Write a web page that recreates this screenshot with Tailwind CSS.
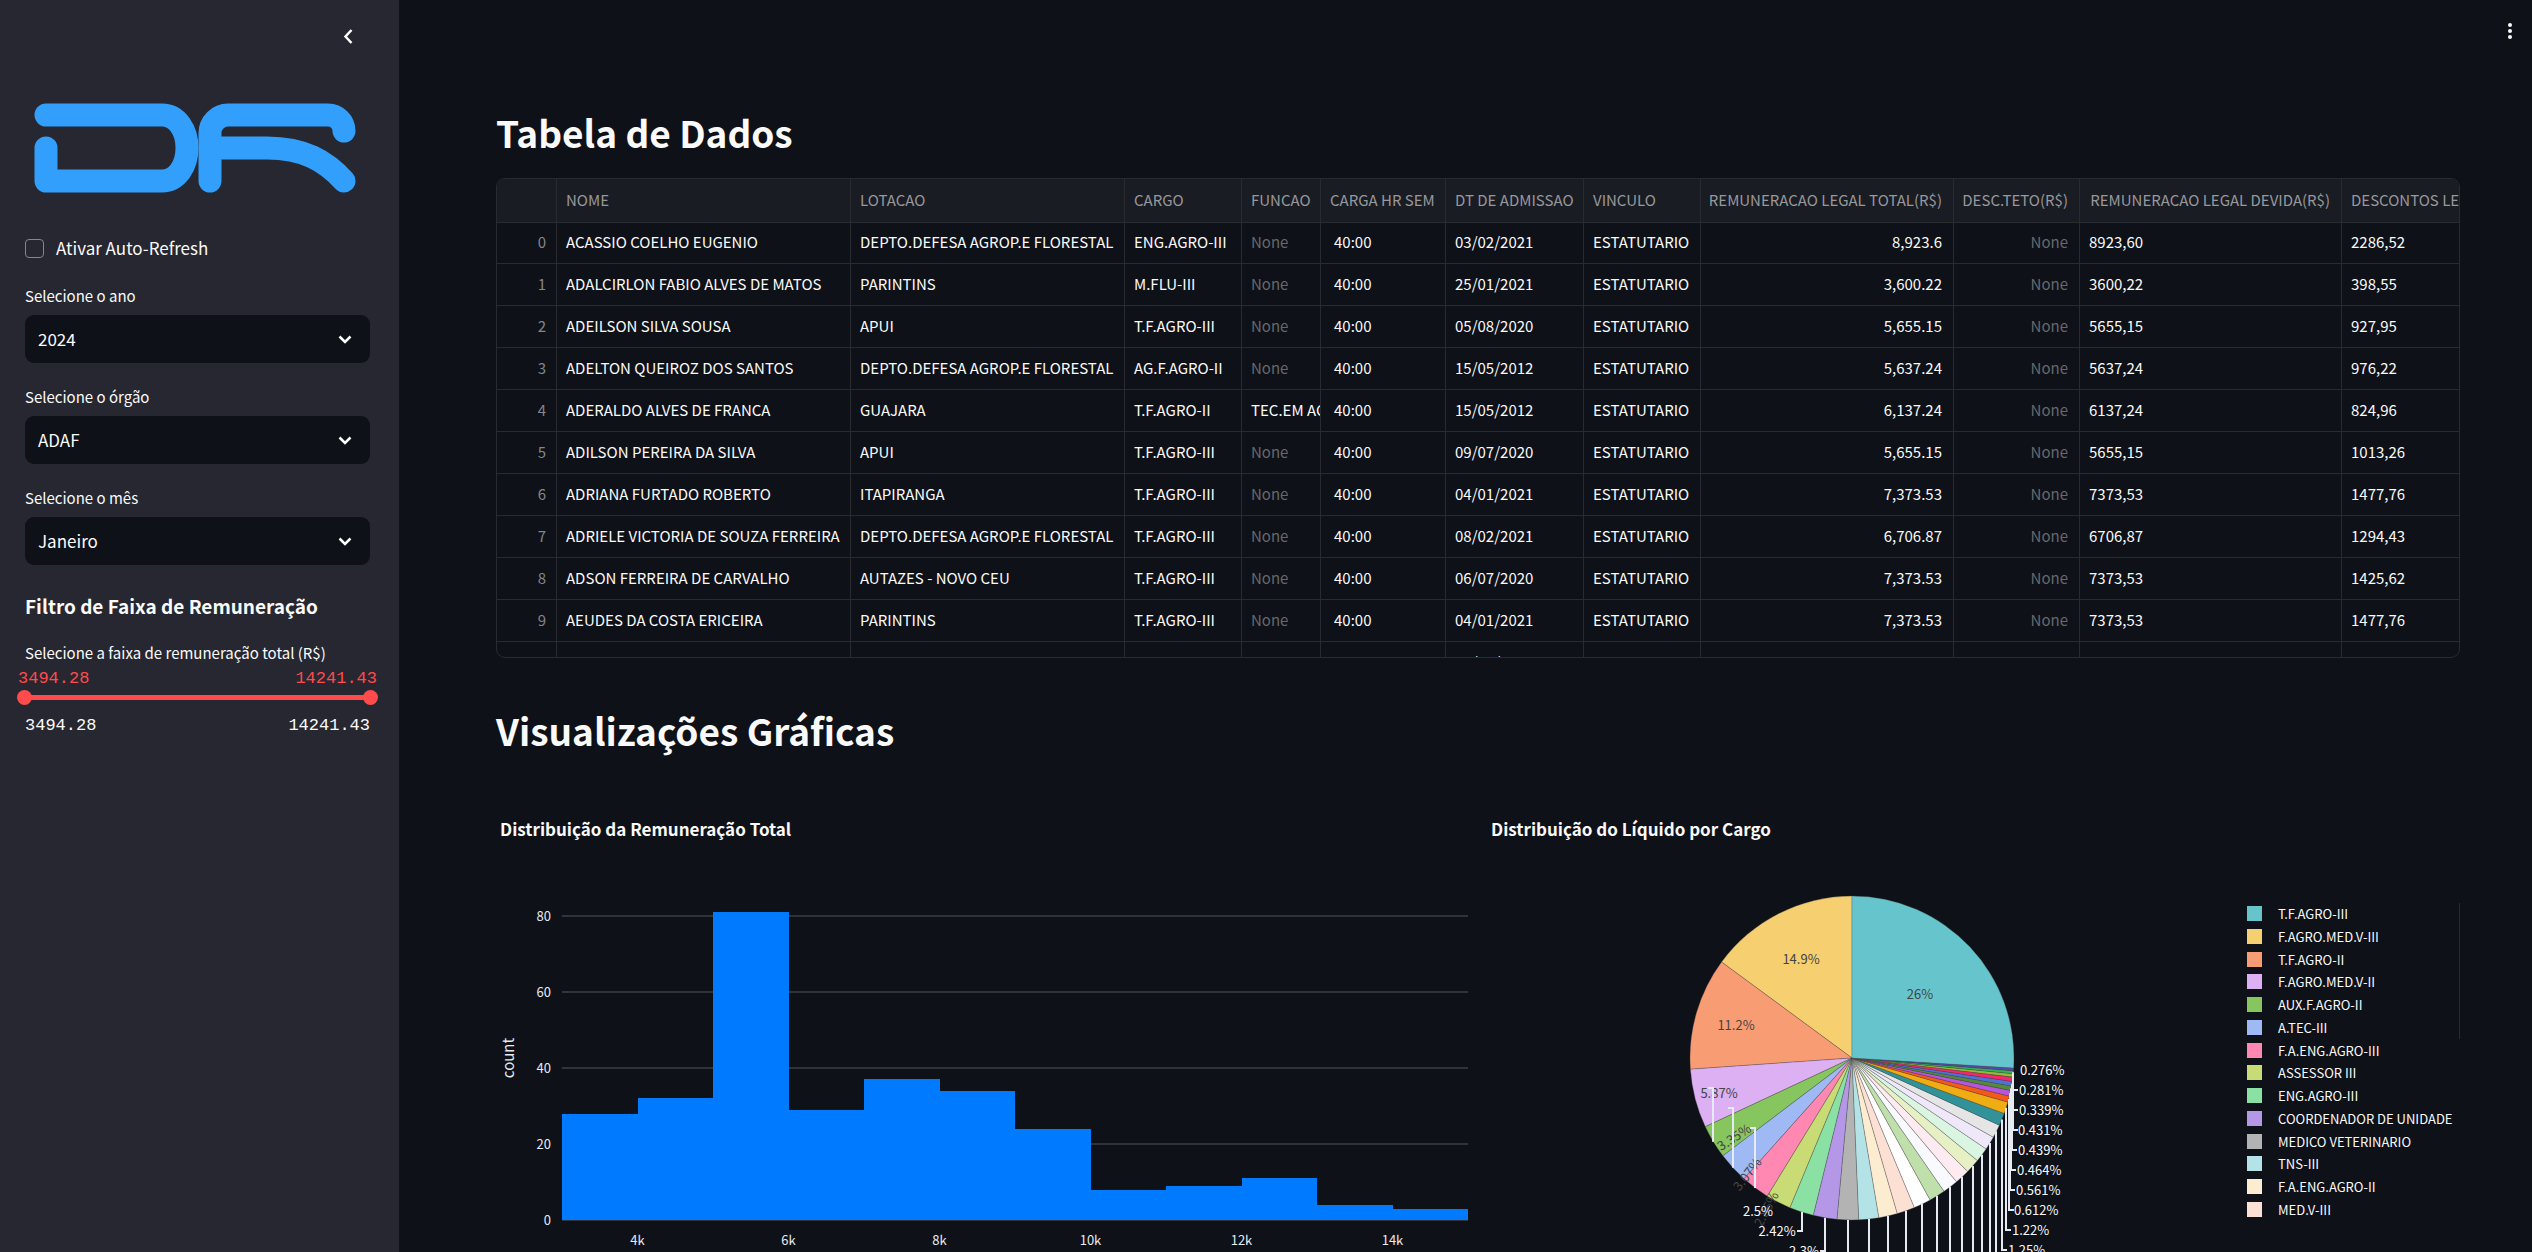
<!DOCTYPE html>
<html lang="pt-BR">
<head>
<meta charset="utf-8">
<title>Tabela de Dados</title>
<meta name="viewport" content="width=device-width, initial-scale=1">
<script src="https://cdn.jsdelivr.net/npm/@tailwindcss/browser@4"></script>
</head>
<body class="bg-[#0e1117] text-[#fafafa] font-['Noto_Sans_CJK_SC',sans-serif] text-[17px]">
<div class="flex h-screen overflow-hidden">

  <!-- Sidebar -->
  <aside class="w-[399px] shrink-0 bg-[#262730] pl-[25px] pr-[29px] flex flex-col">
    <div class="h-[90px] flex items-start justify-end pt-6 pr-2.5">
      <button type="button" aria-label="Fechar barra lateral" class="size-6">
        <svg viewBox="0 0 24 24" class="size-6" fill="none" stroke="#fff" stroke-width="2.500"><path d="M15.500 6l-6 6.500 6 6.500"/></svg>
      </button>
    </div>

    <svg viewBox="0 0 345 116" class="w-full" fill="none" stroke="#319ffb" stroke-width="23" stroke-linecap="round" stroke-linejoin="round" role="img" aria-label="DR">
      <path d="M21 25H137C152 25 162 40 162 58S152 91 137 91H21V58"/>
      <path d="M185 91V43A18 18 0 0 1 203 25H303A16 16 0 0 1 319 41"/>
      <path d="M188 58H242C279 58 301 71 319 91"/>
    </svg>

    <label class="mt-[26px] h-8 flex items-center gap-3">
      <input type="checkbox" class="appearance-none size-[19px] rounded border border-[#85868b]">
      <span>Ativar Auto-Refresh</span>
    </label>

    <div class="mt-5 flex flex-col gap-[22px]">
      <div class="flex flex-col gap-[7px]">
        <label for="ano" class="text-[15px] leading-6">Selecione o ano</label>
        <div class="relative">
          <select id="ano" class="appearance-none w-full h-12 rounded-[9px] bg-[#0e1117] pl-[13px]"><option>2024</option></select>
          <svg viewBox="0 0 24 24" class="pointer-events-none absolute right-[13px] top-3 size-6" fill="none" stroke="#fff" stroke-width="2.500"><path d="M6.500 9.500l5.500 5.500L17.500 9.500"/></svg>
        </div>
      </div>
      <div class="flex flex-col gap-[7px]">
        <label for="orgao" class="text-[15px] leading-6">Selecione o órgão</label>
        <div class="relative">
          <select id="orgao" class="appearance-none w-full h-12 rounded-[9px] bg-[#0e1117] pl-[13px]"><option>ADAF</option></select>
          <svg viewBox="0 0 24 24" class="pointer-events-none absolute right-[13px] top-3 size-6" fill="none" stroke="#fff" stroke-width="2.500"><path d="M6.500 9.500l5.500 5.500L17.500 9.500"/></svg>
        </div>
      </div>
      <div class="flex flex-col gap-[7px]">
        <label for="mes" class="text-[15px] leading-6">Selecione o mês</label>
        <div class="relative">
          <select id="mes" class="appearance-none w-full h-12 rounded-[9px] bg-[#0e1117] pl-[13px]"><option>Janeiro</option></select>
          <svg viewBox="0 0 24 24" class="pointer-events-none absolute right-[13px] top-3 size-6" fill="none" stroke="#fff" stroke-width="2.500"><path d="M6.500 9.500l5.500 5.500L17.500 9.500"/></svg>
        </div>
      </div>
    </div>

    <h3 class="mt-[26px] text-[19px] leading-[30px] font-semibold whitespace-nowrap">Filtro de Faixa de Remuneração</h3>
    <label for="faixa-min" class="mt-5 text-[15px] leading-6">Selecione a faixa de remuneração total (R$)</label>
    <div class="mt-1 -mx-[7px] flex justify-between font-['Liberation_Mono',monospace] leading-5 text-[#ff4b4b]">
      <output>3494.28</output><output>14241.43</output>
    </div>
    <div class="relative -mx-2 h-4">
      <div class="absolute inset-x-2 top-[6px] h-[5px] bg-[#ff4b4b]"></div>
      <input id="faixa-min" type="range" min="3494.28" max="14241.43" step="0.01" value="3494.28" class="absolute inset-0 w-full h-4 appearance-none bg-transparent [&::-webkit-slider-thumb]:appearance-none [&::-webkit-slider-thumb]:size-[15px] [&::-webkit-slider-thumb]:rounded-full [&::-webkit-slider-thumb]:bg-[#ff4b4b]">
      <input aria-label="Valor máximo" type="range" min="3494.28" max="14241.43" step="0.01" value="14241.43" class="absolute inset-0 w-full h-4 appearance-none bg-transparent [&::-webkit-slider-thumb]:appearance-none [&::-webkit-slider-thumb]:size-[15px] [&::-webkit-slider-thumb]:rounded-full [&::-webkit-slider-thumb]:bg-[#ff4b4b]">
    </div>
    <div class="mt-[11px] flex justify-between font-['Liberation_Mono',monospace] leading-5">
      <span>3494.28</span><span>14241.43</span>
    </div>
  </aside>

  <!-- Main content -->
  <main class="relative flex-1 min-w-0 pl-[97px] pr-[72px] pt-[106px]">
    <button type="button" aria-label="Menu" class="absolute right-2.5 top-[19px] size-6">
      <svg viewBox="0 0 24 24" class="size-6" fill="#fafafa"><circle cx="12" cy="6" r="2"/><circle cx="12" cy="12" r="2"/><circle cx="12" cy="18" r="2"/></svg>
    </button>

    <h2 class="text-[37px] leading-[52px] font-semibold">Tabela de Dados</h2>

    <div class="mt-5 h-[480px] overflow-hidden rounded-[9px] border border-[#292b31]">
      <table class="table-fixed w-[2100px] border-separate border-spacing-0 text-[15px] leading-5 whitespace-nowrap">
        <colgroup>
          <col class="w-[60px]"><col class="w-[294px]"><col class="w-[274px]"><col class="w-[117px]"><col class="w-[79px]"><col class="w-[125px]"><col class="w-[138px]"><col class="w-[117px]"><col class="w-[253px]"><col class="w-[126px]"><col class="w-[262px]"><col class="w-[255px]">
        </colgroup>
        <thead id="head"></thead>
        <tbody id="rows"></tbody>
      </table>
    </div>

    <h2 class="mt-[46px] text-[37px] leading-[52px] font-semibold">Visualizações Gráficas</h2>

    <div class="mt-11 grid grid-cols-2 gap-5">
      <svg id="hist" viewBox="0 0 972 540" class="w-full fill-[#e6eaf1] text-[13px]"></svg>
      <svg id="pie" viewBox="0 0 972 540" class="w-full fill-[#fafafa] text-[13px]"></svg>
    </div>
  </main>
</div>

<script>
const heads = ['', 'NOME', 'LOTACAO', 'CARGO', 'FUNCAO', 'CARGA HR SEM', 'DT DE ADMISSAO', 'VINCULO', 'REMUNERACAO LEGAL TOTAL(R$)', 'DESC.TETO(R$)', 'REMUNERACAO LEGAL DEVIDA(R$)', 'DESCONTOS LEGAIS(R$)'];
const data = [
  ['ACASSIO COELHO EUGENIO', 'DEPTO.DEFESA AGROP.E FLORESTAL', 'ENG.AGRO-III', null, '03/02/2021', '8,923.6', '8923,60', '2286,52'],
  ['ADALCIRLON FABIO ALVES DE MATOS', 'PARINTINS', 'M.FLU-III', null, '25/01/2021', '3,600.22', '3600,22', '398,55'],
  ['ADEILSON SILVA SOUSA', 'APUI', 'T.F.AGRO-III', null, '05/08/2020', '5,655.15', '5655,15', '927,95'],
  ['ADELTON QUEIROZ DOS SANTOS', 'DEPTO.DEFESA AGROP.E FLORESTAL', 'AG.F.AGRO-II', null, '15/05/2012', '5,637.24', '5637,24', '976,22'],
  ['ADERALDO ALVES DE FRANCA', 'GUAJARA', 'T.F.AGRO-II', 'TEC.EM AGROPECUARIA', '15/05/2012', '6,137.24', '6137,24', '824,96'],
  ['ADILSON PEREIRA DA SILVA', 'APUI', 'T.F.AGRO-III', null, '09/07/2020', '5,655.15', '5655,15', '1013,26'],
  ['ADRIANA FURTADO ROBERTO', 'ITAPIRANGA', 'T.F.AGRO-III', null, '04/01/2021', '7,373.53', '7373,53', '1477,76'],
  ['ADRIELE VICTORIA DE SOUZA FERREIRA', 'DEPTO.DEFESA AGROP.E FLORESTAL', 'T.F.AGRO-III', null, '08/02/2021', '6,706.87', '6706,87', '1294,43'],
  ['ADSON FERREIRA DE CARVALHO', 'AUTAZES - NOVO CEU', 'T.F.AGRO-III', null, '06/07/2020', '7,373.53', '7373,53', '1425,62'],
  ['AEUDES DA COSTA ERICEIRA', 'PARINTINS', 'T.F.AGRO-III', null, '04/01/2021', '7,373.53', '7373,53', '1477,76'],
  ['AGEMIRO MORA LOPES', 'PAUINI', 'CC.SOFTWARE', 'CC.SOFTWARE', '04/01/2021', '7,373.53', '7373,53', '1477,76'],
];
const line = 'border-r border-b border-[#292b31] overflow-hidden pt-0 pb-0.5';
document.getElementById('head').innerHTML = '<tr>' + heads.map((h, i) =>
  `<th scope="col" class="${line} h-11 bg-[#1a1c23] font-normal text-[#97989c] ${i >= 8 && i <= 10 ? 'text-right pr-[11px]' : 'text-left pl-[9px]'}">${h}</th>`).join('') + '</tr>';
document.getElementById('rows').innerHTML = data.map((d, i) => {
  const none = '<span class="text-[#66686d]">None</span>';
  const left = (v, pad = 'pl-[9px]') => `<td class="${line} ${pad}">${v}</td>`;
  const right = v => `<td class="${line} text-right pr-[11px]">${v}</td>`;
  return `<tr class="${i ? 'h-[42px]' : 'h-[41px]'}"><td class="${line} text-right pr-2.5 text-[#84868a]">${i}</td>` +
    left(d[0]) + left(d[1]) + left(d[2]) + left(d[3] || none) + left('40:00', 'pl-[13px]') + left(d[4]) + left('ESTATUTARIO') +
    right(d[5]) + right(none) + left(d[6]) + left(d[7]) + '</tr>';
}).join('');

/* Histogram */
const counts = [28, 32, 81, 29, 37, 34, 24, 8, 9, 11, 4, 3];
const X0 = 66, BW = 75.5, Y0 = 420, U = 3.8;
let h = '<text x="4" y="36" class="text-[17px] font-semibold fill-[#fafafa]">Distribuição da Remuneração Total</text>';
for (const v of [0, 20, 40, 60, 80]) {
  h += `<rect x="${X0}" y="${Y0 - v * U - 1}" width="906" height="2" fill="#31333c"/><text x="55" y="${Y0 - v * U + 5}" text-anchor="end">${v}</text>`;
}
counts.forEach((c, i) => {
  const a = Math.round(X0 + i * BW), b = Math.round(X0 + (i + 1) * BW), t = Math.round(Y0 - c * U);
  h += `<rect x="${a}" y="${t}" width="${b - a}" height="${Y0 - t}" fill="#007aff"/>`;
});
['4k', '6k', '8k', '10k', '12k', '14k'].forEach((t, i) => h += `<text x="${X0 + BW + i * 151}" y="445" text-anchor="middle">${t}</text>`);
h += '<text transform="translate(18 258) rotate(-90)" text-anchor="middle" class="text-[15px]">count</text>';
document.getElementById('hist').innerHTML = h;

/* Pie: first slice runs clockwise from the top, the others follow anticlockwise */
const CX = 364, CY = 258, R = 162;
const slices = [
  [14.9, '#f6cf71'], [11.2, '#f89c74'], [5.87, '#dcb0f2'], [3.35, '#87c55f'], [3.07, '#9eb9f3'], [2.86, '#fe88b1'],
  [2.5, '#c9db74'], [2.42, '#8be0a4'], [2.36, '#b497e7'], [2.14, '#b3b3b3'], [1.99, '#b3e3e6'], [1.85, '#fcedd0'],
  [1.78, '#fde0d4'], [1.72, '#ffffff'], [1.61, '#bfe0aa'], [1.55, '#f8faff'], [1.49, '#feeaf1'], [1.43, '#e7f0c4'],
  [1.43, '#daf6e3'], [1.35, '#efe8fa'], [1.32, '#e5e5e5'], [1.25, '#329299'], [1.17, '#f0ad13'], [0.612, '#f4581b'],
  [0.561, '#b556dd'], [0.464, '#57893c'], [0.439, '#5071d8'], [0.431, '#f6276a'], [0.339, '#95b93b'], [0.281, '#2fb457'], [0.276, '#5b46ad'],
];
const at = (p, r = R) => [CX - r * Math.sin(p * Math.PI / 50), CY - r * Math.cos(p * Math.PI / 50)];
const wedge = (a, b, c) => `<path d="M${CX} ${CY}L${at(a)}A${R} ${R} 0 0 0 ${at(b)}Z" fill="${c}" stroke="#444" stroke-width="0.3"/>`;
let g = '<text x="3" y="36" class="text-[17px] font-semibold">Distribuição do Líquido por Cargo</text>';
let pos = 0;
const mids = [];
for (const [v, c] of slices) { g += wedge(pos, pos + v, c); mids.push(at(pos + v / 2)); pos += v; }
g += wedge(pos, 100, '#66c5cc');

const inside = [['26%', 432, 194, 0], ['14.9%', 313, 159, 0], ['11.2%', 248, 225, 0], ['5.87%', 231, 293, 0], ['3.35%', 246, 337, -33], ['3.07%', 259, 374, -52], ['2.86%', 278, 409, -62]];
for (const [t, x, y, a] of inside) g += `<text transform="translate(${x} ${y}) rotate(${a})" y="5" text-anchor="middle" class="fill-[#444]">${t}</text>`;

const leader = (m, y, dx) => `<path d="M${Math.round(m[0])} ${m[1]}V${y}h${dx}" fill="none" stroke="#e6eaf1" stroke-width="2"/>`;
g += leader(mids[3], 288, -5) + leader(mids[4], 308, -5) + leader(mids[5], 328, -5);
g += leader(mids[7], 431, -5) + leader(mids[8], 451, -5);
for (let i = 9; i < 21; i++) g += leader(mids[i], 540, 0);
g += '<text x="270" y="416" text-anchor="middle">2.5%</text><text x="289" y="436" text-anchor="middle">2.42%</text><text x="316" y="456" text-anchor="middle">2.3%</text>';
const outer = [['1.25%', 520, 450, 21], ['1.22%', 524, 430, 22], ['0.612%', 526, 410, 23], ['0.561%', 528, 390, 24], ['0.464%', 529, 370, 25], ['0.439%', 530, 350, 26], ['0.431%', 530, 330, 27], ['0.339%', 531, 310, 28], ['0.281%', 531, 290, 29], ['0.276%', 532, 270, 0]];
for (const [t, x, y, m] of outer) g += (m ? leader(mids[m], y, 5) : '') + `<text x="${x}" y="${y + 5}">${t}</text>`;

const legend = [['T.F.AGRO-III', '#66c5cc'], ['F.AGRO.MED.V-III', '#f6cf71'], ['T.F.AGRO-II', '#f89c74'], ['F.AGRO.MED.V-II', '#dcb0f2'], ['AUX.F.AGRO-II', '#87c55f'], ['A.TEC-III', '#9eb9f3'], ['F.A.ENG.AGRO-III', '#fe88b1'], ['ASSESSOR III', '#c9db74'], ['ENG.AGRO-III', '#8be0a4'], ['COORDENADOR DE UNIDADE', '#b497e7'], ['MEDICO VETERINARIO', '#b3b3b3'], ['TNS-III', '#b3e3e6'], ['F.A.ENG.AGRO-II', '#fcedd0'], ['MED.V-III', '#fde0d4']];
legend.forEach(([t, c], i) => {
  const y = Math.round(106 + i * 296 / 13);
  g += `<rect x="759" y="${y}" width="15" height="15" fill="${c}"/><text x="790" y="${y + 13}">${t}</text>`;
});
g += '<rect x="971" y="103" width="1" height="136" fill="#282a32"/>';
document.getElementById('pie').innerHTML = g;
</script>
</body>
</html>
